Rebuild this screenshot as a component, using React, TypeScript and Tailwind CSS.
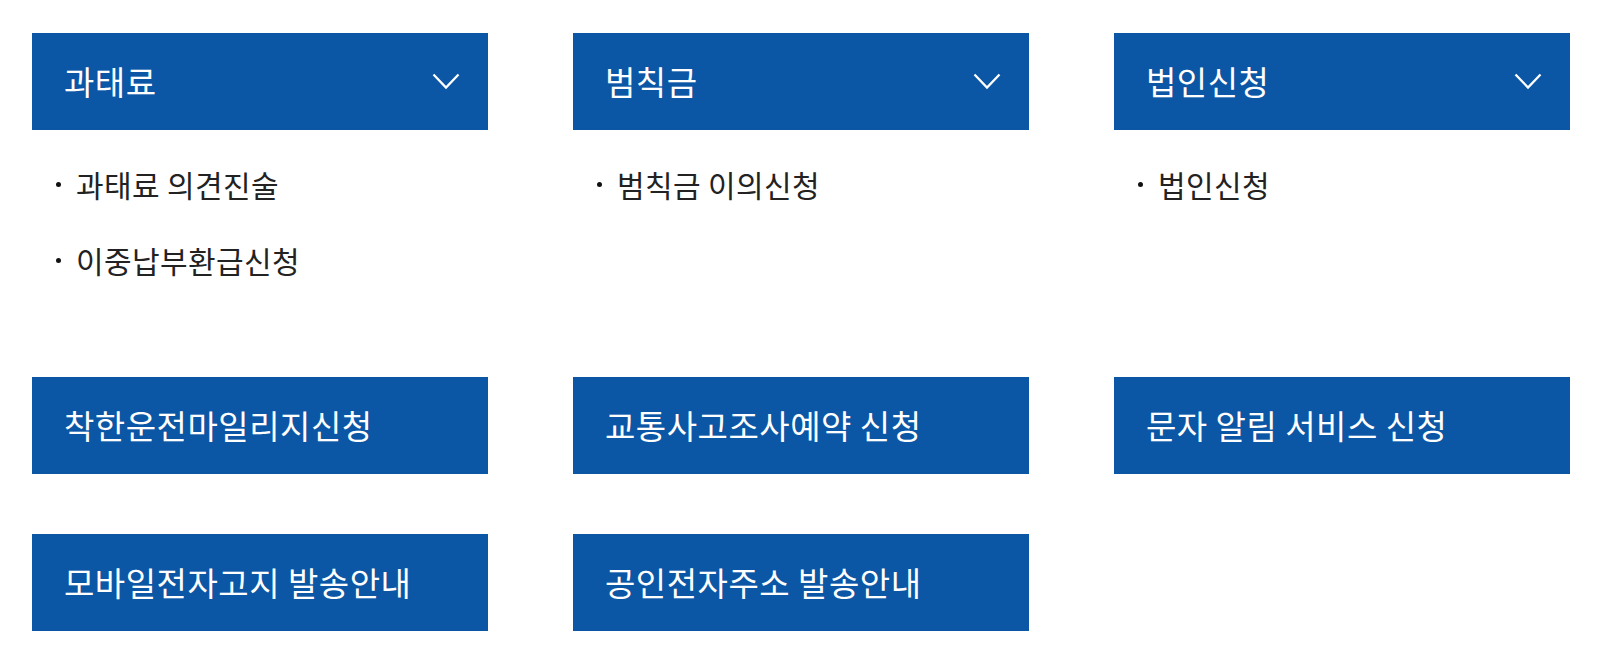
const groups = [
  { title: "과태료", items: ["과태료 의견진술", "이중납부환급신청"] },
  { title: "범칙금", items: ["범칙금 이의신청"] },
  { title: "법인신청", items: ["법인신청"] },
]

const links = [
  "착한운전마일리지신청",
  "교통사고조사예약 신청",
  "문자 알림 서비스 신청",
  "모바일전자고지 발송안내",
  "공인전자주소 발송안내",
]

function Chevron() {
  return (
    <svg width="28" height="17" viewBox="0 0 28 17" fill="none" className="shrink-0">
      <polyline points="1.5,1.5 14,14.5 26.5,1.5" stroke="white" strokeWidth="2.3" />
    </svg>
  )
}

export default function App() {
  return (
    <div
      className="min-h-screen bg-white pt-[33px] pl-[32px]"
      style={{ fontFamily: '"Noto Sans CJK KR", "Noto Sans", sans-serif' }}
    >
      <div className="grid grid-cols-[456px_456px_456px] gap-x-[85px] mb-[97px]">
        {groups.map((g) => (
          <div key={g.title}>
            <button className="w-full h-[97px] bg-[#0b56a5] pl-[32px] pr-[28px] flex items-center justify-between text-white">
              <span className="text-[33px] font-normal tracking-[0.5px]">{g.title}</span>
              <Chevron />
            </button>
            <ul className="pt-[34px] pl-[24px] flex flex-col gap-[36px]">
              {g.items.map((it) => (
                <li key={it} className="flex items-center gap-[15px] leading-[40px] text-[30px] text-[#222]">
                  <span className="w-[5px] h-[5px] rounded-full bg-[#111]"></span>
                  <span className="tracking-[0.4px]">{it}</span>
                </li>
              ))}
            </ul>
          </div>
        ))}
      </div>
      <div className="grid grid-cols-[456px_456px_456px] gap-x-[85px] gap-y-[60px]">
        {links.map((l) => (
          <a
            key={l}
            className="h-[97px] bg-[#0b56a5] px-[32px] flex items-center text-white text-[33px] font-normal tracking-[0.5px]"
          >
            {l}
          </a>
        ))}
      </div>
    </div>
  )
}
